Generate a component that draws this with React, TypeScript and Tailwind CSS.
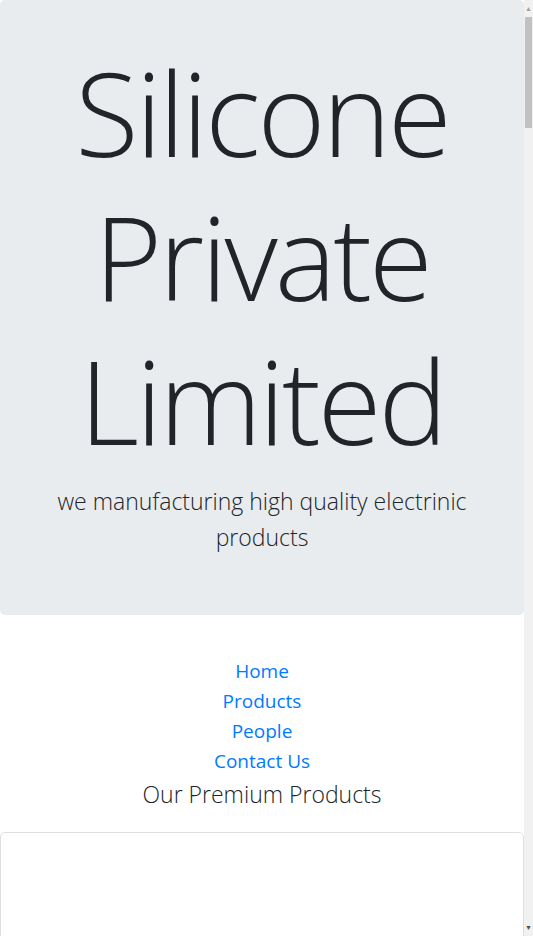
export default function App() {
  return (
    <div className="min-h-screen bg-white text-[#212529] font-['Open_Sans',sans-serif]">
      <div className="mr-[9px]">
        <div className="bg-[#e9ecef] rounded-[5px] px-4 pt-[40px] pb-[60px] text-center">
          <h1 className="text-[116px] leading-[144px] font-light tracking-[-3px]">
            Silicone Private Limited
          </h1>
          <p className="text-[23px] leading-[36px] font-light mt-[11px] px-8">
            we manufacturing high quality electrinic products
          </p>
        </div>

        <nav className="flex flex-col items-center mt-[41px]">
          <a href="#" className="text-[19px] leading-[30px] text-[#007bff]">Home</a>
          <a href="#" className="text-[19px] leading-[30px] text-[#007bff]">Products</a>
          <a href="#" className="text-[19px] leading-[30px] text-[#007bff]">People</a>
          <a href="#" className="text-[19px] leading-[30px] text-[#007bff]">Contact Us</a>
        </nav>

        <h2 className="text-center text-[23px] leading-[36px] font-light">Our Premium Products</h2>

        <div className="mt-[20px] border border-[#dfdfdf] rounded-[5px] h-[400px]"></div>
      </div>

      <div className="fixed top-0 right-0 h-screen w-[9px] bg-[#f1f1f1] flex flex-col items-center">
        <div className="text-[7px] leading-[17px] text-[#a3a3a3]">▲</div>
        <div className="w-[7px] h-[111px] bg-[#c1c1c1]"></div>
        <div className="flex-1"></div>
        <div className="text-[7px] leading-[17px] text-[#505050]">▼</div>
      </div>
    </div>
  );
}
